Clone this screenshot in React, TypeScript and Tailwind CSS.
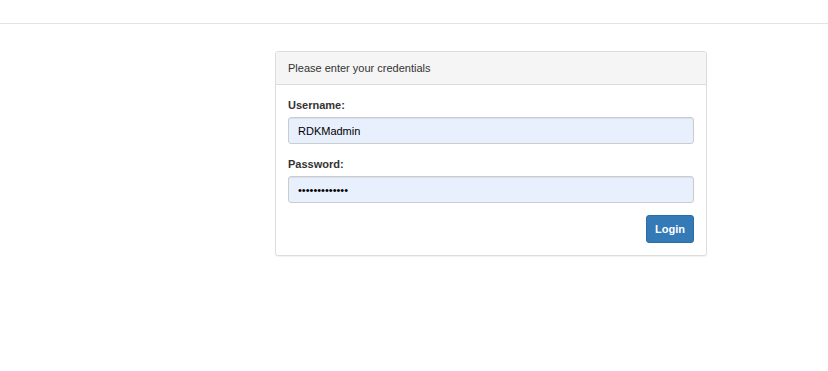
import { useState } from 'react';

export default function App() {
  const [username, setUsername] = useState('RDKMadmin');
  const [password, setPassword] = useState('1234567890123');

  return (
    <div className="min-h-screen bg-white text-[#333] font-['Liberation_Sans',Arial,sans-serif] text-[11px] leading-[16px]">
      {/* top bar */}
      <div className="h-[24px] border-b border-[#e3e3e3]" />

      <div className="pt-[27px] pl-[275px]">
        <div className="w-[432px] rounded-[3px] border border-[#ddd] bg-white shadow-[0_1px_1px_rgba(0,0,0,0.05)]">
          <div className="h-[33px] rounded-t-[3px] border-b border-[#ddd] bg-[#f5f5f5] px-[12px] py-[8px]">
            Please enter your credentials
          </div>

          <form className="p-[12px]" onSubmit={(e) => e.preventDefault()}>
            <div className="mb-[12px]">
              <label className="mb-[4px] block font-bold">Username:</label>
              <input
                type="text"
                value={username}
                onChange={(e) => setUsername(e.target.value)}
                className="block h-[27px] w-full rounded-[3px] border border-[#ccc] bg-[#e8f0fe] px-[9px] text-[11px] text-black outline-none shadow-[inset_0_1px_1px_rgba(0,0,0,0.075)]"
              />
            </div>

            <div className="mb-[12px]">
              <label className="mb-[4px] block font-bold">Password:</label>
              <input
                type="password"
                value={password}
                onChange={(e) => setPassword(e.target.value)}
                className="block h-[27px] w-full rounded-[3px] border border-[#ccc] bg-[#e8f0fe] px-[9px] text-[11px] text-black outline-none shadow-[inset_0_1px_1px_rgba(0,0,0,0.075)]"
              />
            </div>

            <div className="flex justify-end">
              <button
                type="submit"
                className="h-[28px] w-[48px] rounded-[3px] border border-[#2e6da4] bg-[#337ab7] text-[11px] font-bold text-white"
              >
                Login
              </button>
            </div>
          </form>
        </div>
      </div>
    </div>
  );
}
